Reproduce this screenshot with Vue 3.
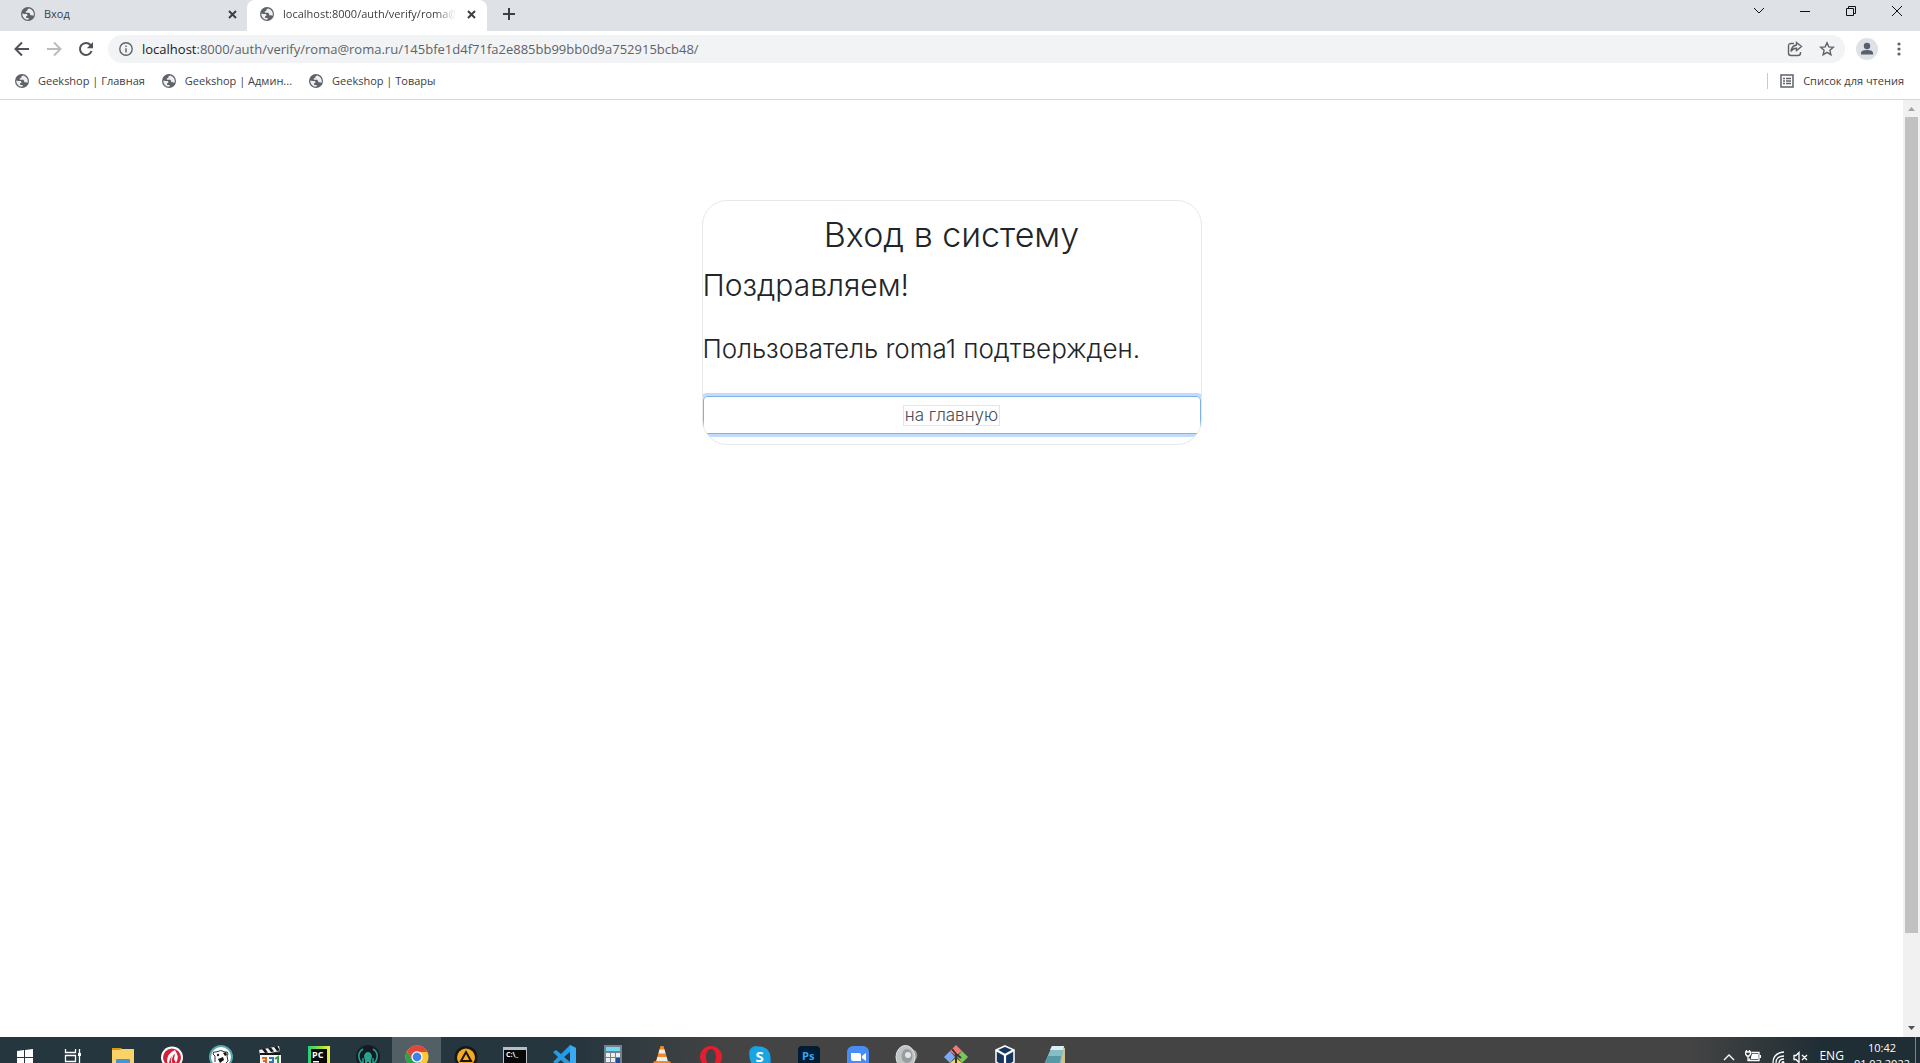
<script setup>
const bookmarks = ['Geekshop | Главная', 'Geekshop | Админ...', 'Geekshop | Товары']
const url = { host: 'localhost', path: ':8000/auth/verify/roma@roma.ru/145bfe1d4f71fa2e885bb99bb0d9a752915bcb48/' }
</script>

<template>
  <div class="screen">
    <svg class="defs" aria-hidden="true">
      <symbol id="globe" viewBox="0 0 14 14">
        <circle cx="7" cy="7" r="7" fill="#5f6368" />
        <path d="M8.2 1.4 6.500 2.300v1.200L4.800 4.400v1.300h3.400l1 1.200v1.300h1.700l1.600.6A5.700 5.700 0 0 0 8.200 1.400ZM1.300 6.600A5.700 5.700 0 0 0 6.600 12.700l1.100-.5V10.900H5.200L5 9.400l1.600-.9-.7-1.400-2.600-.1Z" fill="#eceef1" />
      </symbol>
    </svg>

    <header>
      <div class="tabstrip">
        <div class="tab">
          <svg class="fav"><use href="#globe" /></svg>
          <span class="title">Вход</span>
          <button class="close" aria-label="Закрыть"><svg width="9" height="9" viewBox="0 0 9 9"><path d="m1 1 7 7M8 1 1 8" /></svg></button>
        </div>
        <div class="tab active">
          <svg class="fav"><use href="#globe" /></svg>
          <span class="title">localhost:8000/auth/verify/roma@</span>
          <button class="close" aria-label="Закрыть"><svg width="9" height="9" viewBox="0 0 9 9"><path d="m1 1 7 7M8 1 1 8" /></svg></button>
        </div>
        <button class="plus" aria-label="Новая вкладка"><svg width="12" height="12" viewBox="0 0 12 12"><path d="M6 0v12M0 6h12" /></svg></button>
        <div class="window">
          <button aria-label="Поиск вкладок"><svg width="12" height="12" viewBox="0 0 12 12"><path d="m1 3 5 5 5-5" /></svg></button>
          <button aria-label="Свернуть"><svg width="12" height="12" viewBox="0 0 12 12"><path d="M1 6.500h10" /></svg></button>
          <button aria-label="Восстановить"><svg width="12" height="12" viewBox="0 0 12 12"><path d="M1.500 3.500h7v7h-7zM3.500 3.500v-2h7v7h-2" /></svg></button>
          <button aria-label="Закрыть окно"><svg width="12" height="12" viewBox="0 0 12 12"><path d="m1 1 10 10M11 1 1 11" /></svg></button>
        </div>
      </div>

      <div class="toolbar">
        <div class="nav">
          <button aria-label="Назад"><svg width="16" height="16" viewBox="0 0 16 16"><path d="M15 8H2M8 1.500 1.500 8 8 14.500" /></svg></button>
          <button class="off" aria-label="Вперёд"><svg width="16" height="16" viewBox="0 0 16 16"><path d="M1 8h13M8 1.500 14.500 8 8 14.500" /></svg></button>
          <button aria-label="Обновить"><svg width="16" height="16" viewBox="0 0 16 16"><path d="M13.600 10A6 6 0 1 1 12.500 4L14 5.500" /><path class="solid" d="M15 1v6.200H8.800Z" /></svg></button>
        </div>
        <div class="omnibox">
          <svg class="info" width="14" height="14" viewBox="0 0 14 14"><circle cx="7" cy="7" r="6.200" /><path d="M7 6.200v4.300M7 3.500v1.500" /></svg>
          <span class="url"><b>{{ url.host }}</b>{{ url.path }}</span>
          <button aria-label="Поделиться"><svg width="16" height="16" viewBox="0 0 16 16"><path d="M7 2.500H4Q1.500 2.500 1.500 5v7Q1.500 14.500 4 14.500h7q2.500 0 2.500-2.500v-1M9.500 1.500l5 4-5 4V7.200Q6 7 4 10.500 4.500 5 9.500 4Z" /></svg></button>
          <button aria-label="Добавить в закладки"><svg width="16" height="16" viewBox="0 0 16 16"><path d="m8 1.800 1.800 4.100 4.500.4-3.400 3 1 4.400L8 11.400l-3.900 2.300 1-4.400-3.400-3 4.500-.4Z" /></svg></button>
        </div>
        <button class="profile" aria-label="Профиль"><svg width="22" height="22" viewBox="0 0 22 22"><circle cx="11" cy="11" r="11" fill="#dee1e6" /><circle cx="11" cy="8" r="3.200" /><path d="M5 16.500v-1.500q0-3 6-3t6 3v1.500Z" /></svg></button>
        <button class="menu" aria-label="Меню"><svg width="4" height="14" viewBox="0 0 4 14"><circle cx="2" cy="2" r="1.600" /><circle cx="2" cy="7" r="1.600" /><circle cx="2" cy="12" r="1.600" /></svg></button>
      </div>

      <nav class="bookmarks">
        <a v-for="b in bookmarks" :key="b" href="#"><svg class="fav"><use href="#globe" /></svg>{{ b }}</a>
        <button class="reading"><svg width="14" height="14" viewBox="0 0 14 14"><path d="M1 1h12v12H1ZM3 4.500h2M6 4.500h5M3 7h2M6 7h5M3 9.500h2M6 9.500h5" /></svg>Список для чтения</button>
      </nav>
    </header>

    <div class="viewport">
      <main>
        <section class="card">
          <h1>Вход в систему</h1>
          <h2>Поздравляем!</h2>
          <h3>Пользователь roma1 подтвержден.</h3>
          <button class="home"><span>на главную</span></button>
        </section>
      </main>
      <div class="scrollbar">
        <svg width="7" height="4" viewBox="0 0 7 4"><path d="M0 4h7L3.500 0Z" fill="#a3a3a3" /></svg>
        <div class="thumb"></div>
        <svg width="7" height="4" viewBox="0 0 7 4"><path d="M0 0h7L3.500 4Z" fill="#505050" /></svg>
      </div>
    </div>

    <footer class="taskbar">
      <div class="apps">
        <button aria-label="Пуск"><svg viewBox="0 0 24 24"><path d="m4 6 7-1v7H4ZM12 4.900 20 4v8h-8ZM4 13h7v7l-7-1ZM12 13h8v8l-8-1Z" fill="#fff" /></svg></button>
        <button aria-label="Представление задач"><svg viewBox="0 0 24 24"><path d="M3.500 4v3.500h10V4M3.500 22v-2.500h10V22M3.500 10.500h10v6h-10ZM17.500 4v18" fill="none" stroke="#fff" stroke-width="1.300" /><path d="M16 8h3v3h-3Z" fill="#fff" /></svg></button>
        <button aria-label="Проводник"><svg viewBox="0 0 24 24"><path d="M1 3h9l2 2h-11Z" fill="#d89b15" /><path d="M1 5h8l1-1h13v18H1Z" fill="#fbd268" /><path d="M5 22v-7q0-1 1-1h12q1 0 1 1v7h-4v-4H9v4Z" fill="#3f96dc" /></svg></button>
        <button aria-label="Wargaming"><svg viewBox="0 0 24 24"><circle cx="12" cy="12.500" r="11" fill="#fff" /><circle cx="12" cy="12.500" r="9" fill="#d4213a" /><path d="M15 5Q7 8 7 17l2 2q0-7 6-10l-1 5 2 4q3-5 1-9Z" fill="#fff" /><path d="M13 10q-3 4-1 10" stroke="#fff" fill="none" /></svg></button>
        <button aria-label="Медведь"><svg viewBox="0 0 24 24"><circle cx="12" cy="12" r="11" fill="#fff" stroke="#55a9ac" stroke-width="2" /><path d="M6 17V11l-2-2q0-3 3-2 5-3 9 0 3-1 3 2l-1 2 1 5-3 3" fill="#fff" stroke="#333" /><path d="m9 14 5-2 1 3-4 3ZM14 8l3-1 1 3-2 1Z" fill="#171717" /><circle cx="9" cy="10" r="1.200" fill="#222" /></svg></button>
        <button aria-label="Media Player Classic"><svg viewBox="0 0 24 24"><path d="m1 5 20-4 1 5-20 4Z" fill="#eee" /><path d="m4 4 3 4 3-.6-3-4ZM10 3l3 4 3-.6-3-4ZM16 2l3 4 3-.6-3-4.600ZM2 8h20v3H2Z" fill="#171717" /><path d="M2 10h21v12H2Z" fill="#f5f5f5" /><path d="M4 13h4v3H5h3v4H4" fill="none" stroke="#dc681c" stroke-width="2" /><path d="M11 13h4v4h-3v4h4" fill="none" stroke="#2878c8" stroke-width="2" /><path d="m17 14 3-2v9" fill="none" stroke="#349844" stroke-width="2" /></svg></button>
        <button aria-label="PyCharm"><svg viewBox="0 0 24 24"><defs><linearGradient id="pc"><stop stop-color="#20d07c" /><stop offset=".6" stop-color="#9be33b" /><stop offset="1" stop-color="#f5ed41" /></linearGradient></defs><path d="M1 1h22v22H1Z" fill="url(#pc)" /><path d="M4 4h16v16H4Z" fill="#090909" /><text x="5" y="12.500" font-size="9" font-weight="700" fill="#fff">PC</text><path d="M6 16h6v1.500H6Z" fill="#fff" /></svg></button>
        <button aria-label="GitKraken"><svg viewBox="0 0 24 24"><circle cx="12" cy="12" r="12" fill="#151a27" /><path d="M8 12a4 5 0 1 1 8 0l-1 3v6h-2v-4h-2v4H9v-6Z" fill="#27a38b" /><path d="M7 4Q2 7 3 13q1 4 4 6V13M17 4q5 3 4 9-1 4-4 6v-6" fill="none" stroke="#27a38b" stroke-width="1.500" /></svg></button>
        <button class="current" aria-label="Chrome"><svg viewBox="0 0 24 24"><circle cx="12" cy="12" r="11.500" fill="#fcc934" /><path d="M12 .5A11.500 11.500 0 0 0 2 6.300L7 15l5-8h10.400A11.500 11.500 0 0 0 12 .5Z" fill="#e2463a" /><path d="M2 6.300A11.500 11.500 0 0 0 11 23.500l4-7-8-2Z" fill="#2ba24c" /><circle cx="12" cy="12" r="5.700" fill="#fff" /><circle cx="12" cy="12" r="4.400" fill="#4080ec" /></svg></button>
        <button aria-label="AIMP"><svg viewBox="0 0 24 24"><circle cx="12" cy="12.500" r="11.500" fill="#171717" /><circle cx="12" cy="12.500" r="9" fill="#f8ab1c" /><path d="m12 7 5 9H7Z" fill="none" stroke="#171717" stroke-width="2" /></svg></button>
        <button aria-label="Командная строка"><svg viewBox="0 0 24 24"><path d="M0 2h24v20H0Z" fill="#b9bec3" /><path d="M1 5h22v16H1Z" fill="#080808" /><text x="3" y="12" font-size="7" font-weight="700" fill="#fff">C:\_</text></svg></button>
        <button aria-label="Visual Studio Code"><svg viewBox="0 0 24 24"><path d="m18 0 6 3v18l-6 3-9-9-5 4-3-2 5-5-5-5 3-2 5 4Zm0 7-6 5 6 5Z" fill="#269be4" /><path d="m18 0 6 3v18l-6 3Z" fill="#38abf4" /></svg></button>
        <button aria-label="Калькулятор"><svg viewBox="0 0 24 24"><path d="M3 0h18v24H3Z" fill="#75818b" /><path d="M5 2h14v4H5Z" fill="#74d8f1" /><path d="M5 8h4v4H5ZM10 8h4v4h-4ZM15 8h4v4h-4ZM5 13h4v4H5ZM10 13h4v4h-4Z" fill="#eee" /><path d="M15 13h4v8h-4Z" fill="#164f98" /></svg></button>
        <button aria-label="VLC"><svg viewBox="0 0 24 24"><path d="M4 16h16l3 7H1Z" fill="#e57b16" /><path d="M10.500 1h3l5 17h-13Z" fill="#f18a24" /><path d="m9.500 4.500-1 4h7l-1-4ZM7.400 12l-1 4h11.200l-1-4Z" fill="#eee" /></svg></button>
        <button aria-label="Opera"><svg viewBox="0 0 24 24"><path fill-rule="evenodd" d="M12 1a11 11 0 1 0 0 22 11 11 0 0 0 0-22Zm0 3c3 0 5 3 5 8s-2 8-5 8-5-3-5-8 2-8 5-8Z" fill="#e51d31" /></svg></button>
        <button aria-label="Skype"><svg viewBox="0 0 24 24"><circle cx="8" cy="8" r="7" fill="#179fe5" /><circle cx="16" cy="16" r="7" fill="#168ed6" /><circle cx="12" cy="12" r="10.500" fill="#19a5e3" /><text x="7.500" y="17" font-size="15" font-weight="700" fill="#fff">S</text></svg></button>
        <button aria-label="Photoshop"><svg viewBox="0 0 24 24"><rect x="1" y="1" width="22" height="22" rx="4" fill="#001d34" /><text x="5" y="15" font-size="11" font-weight="700" fill="#36a7f5">Ps</text></svg></button>
        <button aria-label="Zoom"><svg viewBox="0 0 24 24"><rect x="1" y="1" width="22" height="22" rx="6" fill="#4a8cf6" /><path d="M5 8h8q2 0 2 2v6H7q-2 0-2-2ZM16 11l4-3v8l-4-3Z" fill="#fff" /></svg></button>
        <button aria-label="Динамик"><svg viewBox="0 0 24 24"><path d="m15 3 6 3q3 5-1 10l-6 4Z" fill="#8f9495" /><ellipse cx="10.500" cy="12" rx="9.500" ry="11.500" fill="#bfc4c5" stroke="#e2e2e2" /><ellipse cx="12" cy="11" rx="5.500" ry="7" fill="#979da0" /><circle cx="13" cy="10" r="3" fill="#e3e6e7" /></svg></button>
        <button aria-label="Git"><svg viewBox="0 0 24 24"><path d="m12 0 6 6-6 5-6-5Z" fill="#f17c77" /><path d="m6 6 5 6-5 6-6-6Z" fill="#7baaf3" /><path d="m18 6 6 6-6 6-5-6Z" fill="#79c75a" /><path d="m12 13 6 5-6 6-6-6Z" fill="#f3d65c" /><path d="m8 4 4 5v12M12 9l5 4" fill="none" stroke="#343434" stroke-width="2" /></svg></button>
        <button aria-label="VirtualBox"><svg viewBox="0 0 24 24"><path d="m12 1 9 4v12l-9 6-9-6V5Z" fill="#17365e" stroke="#f4f7fb" stroke-width="1.600" /><path d="m3 5 9 5 9-5M12 10v13" fill="none" stroke="#fff" stroke-width="2.200" /></svg></button>
        <button aria-label="Блокнот"><svg viewBox="0 0 24 24"><path d="m19 2 4 1v19h-5Z" fill="#d1c18d" /><path d="M10 1h12l-4 21H1Z" fill="#84bdc6" /><path d="M10 1h12l-1 4H8Z" fill="#d9eff1" /><path d="M6 11h13l-2 11H1Z" fill="#5699a6" /></svg></button>
      </div>
      <div class="tray">
        <svg class="i12" viewBox="0 0 12 12"><path d="m1 9 5-5 5 5" /></svg>
        <svg class="i16" viewBox="0 0 16 16"><path d="M6.500 3.500H14v8H4.500V9.500M15.500 6v3M.5 3h5v2L4 7H2L.5 5ZM1.500 3V1M4.500 3V1M3 7v4.500h2" /><path d="M7 5h6v5H6V8Z" fill="#fff" stroke="none" /></svg>
        <svg class="i13" viewBox="0 0 13 13"><path d="M1 12Q1 2 12 1M4 12q0-7 8-7M7 12q0-4 5-4" /><circle cx="11" cy="11.500" r="1.500" fill="#fff" stroke="none" /></svg>
        <svg class="i15" viewBox="0 0 15 13"><path d="M1 4.500h2l3-3v10l-3-3H1ZM9 4l5 5M14 4 9 9" /></svg>
        <span class="lang">ENG</span>
        <div class="clock"><span>10:42</span><span>01.03.2022</span></div>
        <i class="peek"></i>
      </div>
    </footer>
  </div>
</template>

<style>
body { margin: 0; background: #fff; }
</style>

<style scoped>
* { box-sizing: border-box; }
.screen { height: 100vh; display: flex; flex-direction: column; overflow: hidden; font-family: "Open Sans", "Noto Sans", sans-serif; font-size: 11px; color: #3c4043; }
button { border: 0; padding: 0; background: none; font: inherit; color: inherit; display: flex; align-items: center; justify-content: center; }
svg { display: block; flex: none; }
.defs { position: absolute; width: 0; height: 0; }
.fav { width: 14px; height: 14px; }

.tabstrip { display: flex; height: 31px; background: #dee1e6; }
.tab { width: 240px; display: flex; align-items: center; gap: 9px; padding: 0 10px 3px 13px; }
.tab:first-child { width: 247px; padding-left: 21px; padding-right: 9px; }
.tab.active { background: #fff; border-radius: 8px 8px 0 0; }
.title { flex: 1; min-width: 0; overflow: hidden; white-space: nowrap; line-height: 18px; }
.active .title { mask-image: linear-gradient(90deg, #000 88%, transparent); }
.close { width: 12px; height: 12px; }
.close svg { stroke: #3c4043; stroke-width: 2; }
.plus { width: 44px; padding-bottom: 3px; }
.plus svg { stroke: #3c4043; stroke-width: 2; }
.window { margin-left: auto; display: flex; padding-bottom: 9px; }
.window button { width: 46px; }
.window svg { fill: none; stroke: #111; }

.toolbar { height: 36px; display: flex; align-items: center; padding: 0 19px 0 14px; }
.nav { display: flex; gap: 16px; margin-right: 14px; }
.nav svg { fill: none; stroke: #4e5256; stroke-width: 2; }
.nav .solid { fill: #4e5256; stroke: none; }
.nav .off svg { stroke: #babcbe; }
.omnibox { flex: 1; height: 28px; border-radius: 14px; background: #f1f3f4; display: flex; align-items: center; gap: 16px; padding: 0 10px 0 11px; }
.omnibox svg { fill: none; stroke: #5f6368; stroke-width: 1.4; }
.url { flex: 1; margin-left: -7px; font-size: 13px; line-height: 20px; color: #5f6368; white-space: nowrap; }
.url b { font-weight: 400; color: #202124; }
.profile { margin: 0 19px 0 11px; }
.profile svg { fill: #56606e; }
.menu svg { fill: #5f6368; }

.bookmarks { height: 33px; display: flex; align-items: center; gap: 17px; padding: 0 16px 5px 15px; border-bottom: 1px solid #d5d7da; }
.bookmarks a { display: flex; align-items: center; gap: 9px; color: inherit; text-decoration: none; white-space: nowrap; }
.reading { margin-left: auto; gap: 9px; height: 16px; padding-left: 12px; border-left: 1px solid #c8cacd; }
.reading svg { fill: none; stroke: #5f6368; stroke-width: 1.5; }

.viewport { flex: 1; min-height: 0; display: flex; }
main { flex: 1; padding-top: 100px; }
.card { width: 500px; margin: 0 auto; border: 1px solid #e8e8e8; border-radius: 25px; overflow: hidden; padding: 15px 0 10px; font-family: Inter, "Noto Sans", sans-serif; color: #212529; white-space: nowrap; }
h1, h2, h3 { margin: 0; font-weight: 300; }
h1 { font-size: 34px; line-height: 38px; text-align: center; margin-bottom: 14px; }
h2 { font-size: 30px; line-height: 34px; margin-bottom: 32px; }
h3 { font-size: 26px; line-height: 30px; margin-bottom: 32px; }
.home { width: 100%; height: 38px; border: 1px solid #80b1eb; border-radius: 4px; box-shadow: 0 0 0 3px #c1dbf8; font-size: 17px; font-weight: 300; color: #495057; }
.home span { border: 1px solid #e5e5e5; padding: 0 1px; line-height: 19px; }

.scrollbar { width: 17px; background: #f1f1f1; display: flex; flex-direction: column; align-items: center; padding: 7px 0; }
.thumb { width: 13px; flex: 0 1 816px; margin: 6px 0 auto; background: #c1c1c1; }

.taskbar { height: 26px; flex: none; display: flex; justify-content: space-between; overflow: hidden; color: #fff; background: linear-gradient(90deg, #26363e 0 30%, #444 38% 88%, #1f2d34 95%); }
.apps, .tray { display: flex; height: 40px; flex: none; }
.apps button { width: 49px; }
.apps svg { width: 24px; height: 24px; font-family: "Open Sans", sans-serif; }
.apps .current { background: #526066; }
.tray { align-items: center; }
.tray svg { fill: none; stroke: #fff; stroke-width: 1.3; }
.i12 { width: 12px; height: 12px; margin-right: 10px; }
.i16 { width: 16px; height: 16px; margin-right: 11px; }
.i13 { width: 13px; height: 13px; margin-right: 8px; }
.i15 { width: 15px; height: 13px; margin-right: 11px; }
.lang { font-size: 12px; line-height: 16px; margin-bottom: 2px; }
.clock { display: flex; flex-direction: column; align-items: center; line-height: 16px; margin: 0 5px 3px 10px; }
.peek { width: 5px; height: 40px; border-left: 1px solid #78838a; }
</style>
